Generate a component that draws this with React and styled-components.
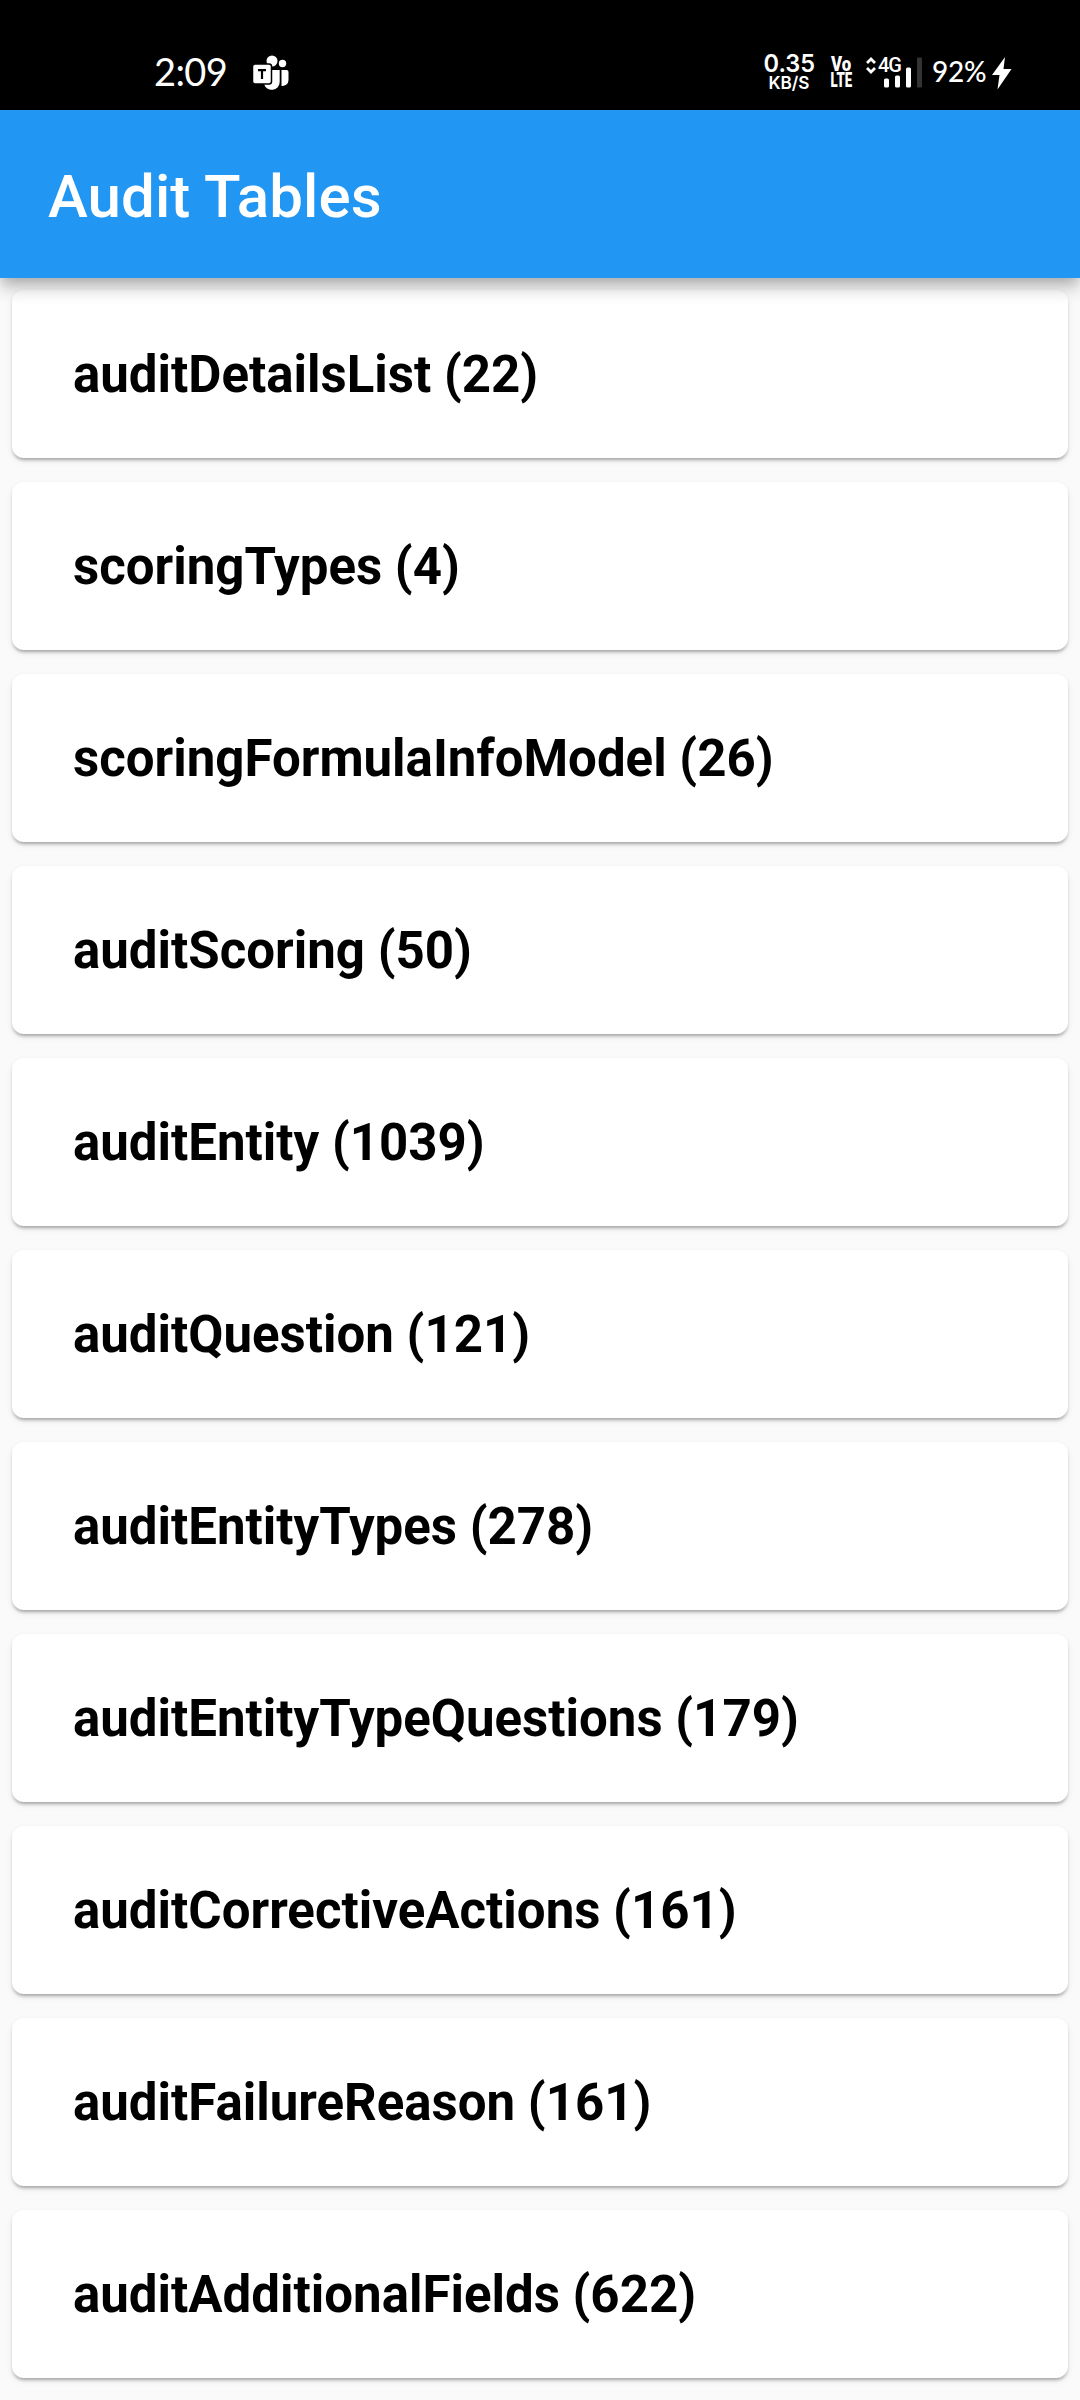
import React from "react";
import styled, { createGlobalStyle } from "styled-components";

const GlobalStyle = createGlobalStyle`
  html, body { margin: 0; padding: 0; background: #fafafa; }
  * { box-sizing: border-box; }
`;

const Screen = styled.div`
  width: 1080px;
  height: 2400px;
  overflow: hidden;
  display: flex;
  flex-direction: column;
  background: #fafafa;
  font-family: Roboto, sans-serif;
`;

const StatusBar = styled.header`
  flex: none;
  height: 110px;
  padding: 35px 68px 0 154px;
  display: flex;
  align-items: center;
  background: #000;
  color: #fff;
`;

const Clock = styled.span`
  width: 98px;
  padding-bottom: 3px;
  font: 400 38px/44px Lato, sans-serif;
  letter-spacing: -0.6px;
  white-space: nowrap;
`;

const Indicators = styled.div`
  margin-left: auto;
  display: flex;
  align-items: center;
`;

const Stack = styled.div`
  display: flex;
  flex-direction: column;
  align-items: center;
  width: ${(p) => p.$width}px;
  margin-right: ${(p) => p.$after}px;
`;

const StackLine = styled.span`
  font-family: ${(p) => p.$family || "Inter"}, sans-serif;
  font-size: ${(p) => p.$size}px;
  font-weight: ${(p) => p.$weight};
  line-height: ${(p) => p.$line}px;
  transform: scaleX(${(p) => p.$stretch || 1});
  white-space: nowrap;
`;

const Signal = styled.div`
  position: relative;
  width: 57px;
  height: 32px;
  margin-right: 9px;
`;

const NetworkLabel = styled.span`
  position: absolute;
  left: 12px;
  top: 0;
  font: 500 20px/17px Roboto, sans-serif;
  letter-spacing: -1px;
`;

const Battery = styled.span`
  width: 60px;
  padding-bottom: 3px;
  font: 500 28px/32px Lato, sans-serif;
  letter-spacing: -0.3px;
  white-space: nowrap;
`;

const AppBar = styled.div`
  flex: none;
  position: relative;
  z-index: 1;
  height: 168px;
  padding: 6px 48px 0;
  display: flex;
  align-items: center;
  background: #2196f3;
  box-shadow: 0 6px 12px -3px rgba(0, 0, 0, 0.2), 0 12px 15px rgba(0, 0, 0, 0.14),
    0 3px 30px rgba(0, 0, 0, 0.06);
`;

const Title = styled.h1`
  margin: 0;
  font-size: 60px;
  font-weight: 500;
  line-height: 70px;
  letter-spacing: 0.1px;
  color: #fff;
`;

const List = styled.ul`
  margin: 0;
  padding: 12px;
  list-style: none;
  display: flex;
  flex-direction: column;
  gap: 24px;
`;

const Card = styled.li`
  flex: none;
  height: 168px;
  padding: 2px 61px 0;
  display: flex;
  align-items: center;
  border-radius: 12px;
  background: #fff;
  box-shadow: 0 3px 3px -1px rgba(0, 0, 0, 0.26), 0 3px 6px rgba(0, 0, 0, 0.1);
`;

const CardLabel = styled.span`
  font-size: 51px;
  font-weight: 700;
  line-height: 60px;
  color: #000;
  white-space: nowrap;
`;

const tables = [
  ["auditDetailsList", 22],
  ["scoringTypes", 4],
  ["scoringFormulaInfoModel", 26],
  ["auditScoring", 50],
  ["auditEntity", 1039],
  ["auditQuestion", 121],
  ["auditEntityTypes", 278],
  ["auditEntityTypeQuestions", 179],
  ["auditCorrectiveActions", 161],
  ["auditFailureReason", 161],
  ["auditAdditionalFields", 622],
];

function TeamsIcon() {
  return (
    <svg width="38" height="38" viewBox="0 0 38 38" fill="#fff">
      <circle cx="20" cy="7" r="5.5" />
      <circle cx="30.500" cy="9.500" r="3.700" />
      <path d="M29.500 16h5a2 2 0 0 1 2 2v8a6 6 0 0 1-7 5.900z" />
      <path d="M12 16h15.700v12a8 8 0 0 1-15.700 2z" />
      <rect x="0.500" y="10" width="19" height="20" rx="2.500" stroke="#000" strokeWidth="1.500" />
      <path d="M6 16.200h8M10 16v9" stroke="#000" strokeWidth="2.200" />
    </svg>
  );
}

function SignalIcon() {
  return (
    <svg width="57" height="32" viewBox="0 0 57 32" fill="#fff">
      <path d="M1 6l4-4 4 4M1 11l4 4 4-4" fill="none" stroke="#fff" strokeWidth="2.800" />
      <rect x="18" y="21.500" width="5" height="9" rx="1.500" />
      <rect x="29" y="18.500" width="5" height="12" rx="1.500" />
      <rect x="40" y="10.500" width="5" height="20" rx="1.500" />
      <rect x="51" y="0.500" width="5" height="30" rx="1" fill="#333" />
    </svg>
  );
}

function BoltIcon() {
  return (
    <svg width="20" height="34" viewBox="0 0 20 34" fill="#fff">
      <path d="M13 1L0 19h7.500L5.500 33.500 19.500 13h-8z" />
    </svg>
  );
}

export default function App() {
  return (
    <>
      <GlobalStyle />
      <Screen>
        <StatusBar>
          <Clock>2:09</Clock>
          <TeamsIcon />
          <Indicators>
            <Stack $width={52} $after={15}>
              <StackLine $size={24} $weight={600} $line={20} $stretch={0.98}>0.35</StackLine>
              <StackLine $size={17.5} $weight={600} $line={18} $stretch={0.98}>KB/S</StackLine>
            </Stack>
            <Stack $width={22} $after={14}>
              <StackLine $family="Roboto" $size={20} $weight={900} $line={16} $stretch={0.84}>Vo</StackLine>
              <StackLine $family="Roboto" $size={20} $weight={900} $line={17} $stretch={0.66}>LTE</StackLine>
            </Stack>
            <Signal>
              <SignalIcon />
              <NetworkLabel>4G</NetworkLabel>
            </Signal>
            <Battery>92%</Battery>
            <BoltIcon />
          </Indicators>
        </StatusBar>
        <AppBar>
          <Title>Audit Tables</Title>
        </AppBar>
        <List>
          {tables.map(([name, count]) => (
            <Card key={name}>
              <CardLabel>{`${name} (${count})`}</CardLabel>
            </Card>
          ))}
        </List>
      </Screen>
    </>
  );
}
